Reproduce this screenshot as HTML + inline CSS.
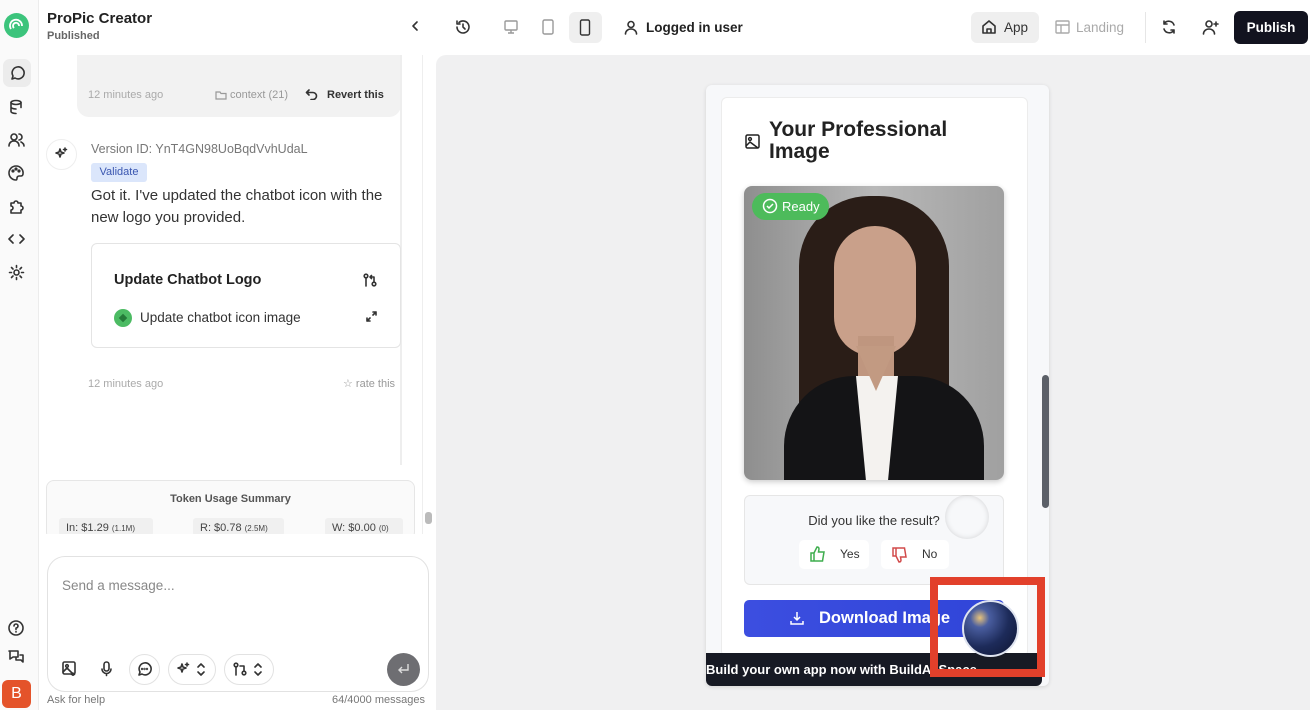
<!DOCTYPE html>
<html><head><style>
*{box-sizing:border-box;margin:0;padding:0}
body{width:1310px;height:710px;overflow:hidden;background:#fff;font-family:"Liberation Sans",sans-serif;position:relative;color:#1f2023}
.a{position:absolute}
svg{display:block}
.ic{stroke:#333;fill:none;stroke-width:1.6;stroke-linecap:round;stroke-linejoin:round}
</style></head><body>
<div class="a" style="left:0;top:0;width:39px;height:710px;background:#fafafa;border-right:1px solid #ececec"></div>
<div class="a" style="left:4px;top:13px;width:25px;height:25px;border-radius:50%;background:#3cc47c"></div>
<svg class="a" style="left:4px;top:13px" width="25" height="25"><path d="M7 16a6 6 0 1 1 11-3M10 15a3 3 0 1 1 5-2" stroke="#fff" stroke-width="1.8" fill="none"/></svg>
<div class="a" style="left:3px;top:59px;width:28px;height:28px;border-radius:7px;background:#ececec"></div>
<svg class="a ic" style="left:9px;top:66px" width="16" height="16"><path d="M3 13l1-3a6 6 0 1 1 2 2z"/></svg>
<svg class="a ic" style="left:9px;top:99px" width="16" height="16"><ellipse cx="7" cy="3.5" rx="5" ry="2"/><path d="M2 3.5v9c0 1 2 2 5 2M12 3.5v5M2 8c0 1 2 2 5 2"/></svg>
<svg class="a ic" style="left:8px;top:132px" width="17" height="16"><circle cx="6" cy="5" r="3"/><path d="M1 14c0-3 2-5 5-5s5 2 5 5M11 2a3 3 0 0 1 0 6M13 10c2 1 3 2 3 4"/></svg>
<svg class="a ic" style="left:8px;top:165px" width="17" height="16"><path d="M8 1a7 7 0 1 0 0 14c1 0 1-1 1-2s1-2 2-2h2a2 2 0 0 0 2-2A7 7 0 0 0 8 1z"/><circle cx="5" cy="6" r=".8"/><circle cx="8" cy="4" r=".8"/><circle cx="11" cy="6" r=".8"/></svg>
<svg class="a ic" style="left:8px;top:198px" width="17" height="16"><path d="M3 5h3a2 2 0 1 1 4 0h3v3a2 2 0 1 1 0 4v3H3v-3a2 2 0 1 0 0-4z"/></svg>
<svg class="a ic" style="left:8px;top:232px" width="17" height="14"><path d="M5 3L1 7l4 4M12 3l4 4-4 4"/></svg>
<svg class="a ic" style="left:8px;top:264px" width="17" height="17"><circle cx="8.5" cy="8.5" r="2.5"/><path d="M8.5 1.5v2M8.5 13.5v2M1.5 8.5h2M13.5 8.5h2M3.5 3.5l1.5 1.5M12 12l1.5 1.5M3.5 13.5L5 12M12 5l1.5-1.5"/></svg>
<svg class="a ic" style="left:8px;top:620px" width="16" height="16"><circle cx="8" cy="8" r="7"/><path d="M6 6a2 2 0 1 1 2 2v1.5M8 11.5v.5"/></svg>
<svg class="a ic" style="left:8px;top:649px" width="17" height="16"><path d="M1 2h9v6H5l-3 2V2zM12 6h3v7l-2-2H8v-2"/></svg>
<div class="a" style="left:2px;top:680px;width:29px;height:28px;border-radius:6px;background:#e4532a;color:#fff;font-size:16px;text-align:center;line-height:28px">B</div>

<div class="a" style="left:47px;top:10px;font-size:15px;font-weight:bold;color:#222">ProPic Creator</div>
<div class="a" style="left:47px;top:30px;font-size:11px;font-weight:bold;color:#666">Published</div>
<svg class="a ic" style="left:411px;top:20px" width="8" height="12"><path d="M6 2L2 6l4 4"/></svg>
<svg class="a ic" style="left:455px;top:19px" width="16" height="16"><path d="M2 8a6 6 0 1 0 2-4.5M2 2v3h3M8 5v3l2 2"/></svg>
<svg class="a" style="left:503px;top:19px" width="16" height="16" fill="none" stroke="#999" stroke-width="1.4"><rect x="2" y="2" width="12" height="9" rx="1"/><path d="M8 11v3M5 14h6"/></svg>
<svg class="a" style="left:541px;top:19px" width="14" height="16" fill="none" stroke="#999" stroke-width="1.4"><rect x="2" y="1" width="10" height="14" rx="1.5"/></svg>
<div class="a" style="left:569px;top:12px;width:33px;height:31px;border-radius:6px;background:#efefef"></div>
<svg class="a" style="left:579px;top:19px" width="12" height="17" fill="none" stroke="#333" stroke-width="1.4"><rect x="1.5" y="1" width="9" height="15" rx="1.5"/></svg>
<svg class="a ic" style="left:624px;top:20px" width="14" height="15"><circle cx="7" cy="4.5" r="3"/><path d="M1.5 14c0-3 2.5-5 5.5-5s5.5 2 5.5 5"/></svg>
<div class="a" style="left:646px;top:20px;font-size:13.5px;font-weight:bold;color:#222">Logged in user</div>
<div class="a" style="left:971px;top:12px;width:68px;height:31px;border-radius:6px;background:#efefef"></div>
<svg class="a ic" style="left:981px;top:19px" width="16" height="16"><path d="M2 7l6-5 6 5v7H2zM6 14v-4h4v4"/></svg>
<div class="a" style="left:1004px;top:20px;font-size:13.5px;color:#333">App</div>
<svg class="a" style="left:1055px;top:20px" width="15" height="14" fill="none" stroke="#aaa" stroke-width="1.4"><rect x="1" y="1" width="13" height="12" rx="1"/><path d="M1 5h13M6 5v8"/></svg>
<div class="a" style="left:1076px;top:20px;font-size:13.5px;color:#aaa">Landing</div>
<div class="a" style="left:1145px;top:12px;width:1px;height:31px;background:#e6e6e6"></div>
<svg class="a ic" style="left:1161px;top:19px" width="16" height="16"><path d="M13 6a5.5 5.5 0 0 0-10-1M3 10a5.5 5.5 0 0 0 10 1M3 2v3h3M13 14v-3h-3"/></svg>
<svg class="a ic" style="left:1202px;top:19px" width="17" height="16"><circle cx="7" cy="5" r="3"/><path d="M1.5 15c0-3 2.5-5 5.5-5s5.5 2 5.5 5M14 3v4M12 5h4"/></svg>
<div class="a" style="left:1234px;top:11px;width:74px;height:33px;border-radius:6px;background:#12131f;color:#fff;font-size:13.5px;font-weight:bold;text-align:center;line-height:33px">Publish</div>

<div class="a" style="left:77px;top:55px;width:324px;height:62px;background:#f2f2f2;border-radius:0 0 12px 12px"></div>
<div class="a" style="left:88px;top:89px;font-size:11px;color:#aaa">12 minutes ago</div>
<svg class="a" style="left:215px;top:90px" width="12" height="10" fill="none" stroke="#999" stroke-width="1.2"><path d="M1 2h4l1 1.5h5v5.5H1z"/></svg>
<div class="a" style="left:230px;top:89px;font-size:11px;color:#999">context (21)</div>
<svg class="a ic" style="left:305px;top:88px" width="13" height="12"><path d="M4 2L1.5 4.5 4 7M1.5 4.5H8a3.5 3.5 0 0 1 0 7H6"/></svg>
<div class="a" style="left:327px;top:89px;font-size:11px;font-weight:bold;color:#333">Revert this</div>
<div class="a" style="left:400px;top:55px;width:2px;height:410px;background:#eee"></div>
<div class="a" style="left:422px;top:55px;width:1px;height:480px;background:#eee"></div>

<div class="a" style="left:46px;top:139px;width:31px;height:31px;border-radius:50%;border:1px solid #eee;background:#fff"></div>
<svg class="a ic" style="left:54px;top:147px" width="14" height="14" stroke-width="1.3"><path d="M6 2l1 3 3 1-3 1-1 3-1-3-3-1 3-1zM11 1v3M9.5 2.5h3"/></svg>
<div class="a" style="left:91px;top:142px;font-size:12.5px;color:#777">Version ID: YnT4GN98UoBqdVvhUdaL</div>
<div class="a" style="left:91px;top:163px;width:56px;height:19px;border-radius:3px;background:#dbe6fb;color:#3a56b0;font-size:11px;text-align:center;line-height:19px">Validate</div>
<div class="a" style="left:91px;top:185px;width:310px;font-size:15px;line-height:22px;color:#333">Got it. I've updated the chatbot icon with the new logo you provided.</div>
<div class="a" style="left:91px;top:243px;width:310px;height:105px;border:1px solid #e4e4e4;border-radius:6px;background:#fff"></div>
<div class="a" style="left:114px;top:272px;font-size:14.5px;font-weight:bold;color:#222">Update Chatbot Logo</div>
<svg class="a ic" style="left:363px;top:273px" width="14" height="14" stroke-width="1.3"><circle cx="3" cy="3" r="1.8"/><circle cx="11" cy="11" r="1.8"/><path d="M3 5v8M11 9V4H7M8.5 2.5L7 4l1.5 1.5"/></svg>
<div class="a" style="left:114px;top:309px;width:18px;height:18px;border-radius:50%;background:#4cbb63"></div>
<div class="a" style="left:120px;top:315px;width:6px;height:6px;background:#257a39;transform:rotate(45deg)"></div>
<div class="a" style="left:140px;top:310px;font-size:13.5px;color:#333">Update chatbot icon image</div>
<svg class="a ic" style="left:366px;top:311px" width="11" height="11" stroke-width="1.2"><path d="M1 10l3-3M10 1L7 4M7 1h3v3M1 7v3h3"/></svg>
<div class="a" style="left:88px;top:378px;font-size:11px;color:#aaa">12 minutes ago</div>
<div class="a" style="left:343px;top:377px;font-size:11px;color:#999">☆ rate this</div>

<div class="a" style="left:46px;top:480px;width:369px;height:60px;border:1px solid #e6e6e6;border-radius:8px;background:#fafafa"></div>
<div class="a" style="left:46px;top:493px;width:369px;text-align:center;font-size:11px;font-weight:bold;color:#555">Token Usage Summary</div>
<div class="a" style="left:59px;top:518px;width:94px;height:18px;background:#f0f0f0;border-radius:3px;font-size:11px;color:#444;padding:4px 7px">In: $1.29 <span style="font-size:8px">(1.1M)</span></div>
<div class="a" style="left:193px;top:518px;width:91px;height:18px;background:#f0f0f0;border-radius:3px;font-size:11px;color:#444;padding:4px 7px">R: $0.78 <span style="font-size:8px">(2.5M)</span></div>
<div class="a" style="left:325px;top:518px;width:78px;height:18px;background:#f0f0f0;border-radius:3px;font-size:11px;color:#444;padding:4px 7px">W: $0.00 <span style="font-size:8px">(0)</span></div>
<div class="a" style="left:40px;top:534px;width:396px;height:176px;background:#fff"></div>
<div class="a" style="left:425px;top:512px;width:7px;height:12px;border-radius:3px;background:#bbb"></div>
<div class="a" style="left:47px;top:556px;width:382px;height:136px;border:1px solid #e2e2e2;border-radius:18px"></div>
<div class="a" style="left:62px;top:578px;font-size:13.5px;color:#888">Send a message...</div>
<svg class="a ic" style="left:62px;top:661px" width="15" height="15" stroke-width="1.4"><rect x="1" y="1" width="12" height="12" rx="1.5"/><circle cx="5" cy="5" r="1.3"/><path d="M1 11l4-4 5 5M11 12v3M9.5 13.5h3"/></svg>
<svg class="a ic" style="left:100px;top:661px" width="13" height="16" stroke-width="1.4"><rect x="4" y="1" width="5" height="9" rx="2.5"/><path d="M2 8a4.5 4.5 0 0 0 9 0M6.5 12.5v2"/></svg>
<div class="a" style="left:129px;top:654px;width:31px;height:31px;border:1px solid #e2e2e2;border-radius:50%"></div>
<svg class="a ic" style="left:137px;top:662px" width="15" height="15" stroke-width="1.3"><path d="M2 13l1-3a6 6 0 1 1 2 2z"/><circle cx="5" cy="7" r=".4"/><circle cx="7.5" cy="7" r=".4"/><circle cx="10" cy="7" r=".4"/></svg>
<div class="a" style="left:168px;top:654px;width:48px;height:31px;border:1px solid #e2e2e2;border-radius:16px"></div>
<svg class="a ic" style="left:176px;top:662px" width="30" height="15" stroke="#777" stroke-width="1.3"><path d="M6 2l1 3 3 1-3 1-1 3-1-3-3-1 3-1zM11 1v3M9.5 2.5h3M22 5l3-3 3 3M22 10l3 3 3-3"/></svg>
<div class="a" style="left:224px;top:654px;width:50px;height:31px;border:1px solid #e2e2e2;border-radius:16px"></div>
<svg class="a ic" style="left:233px;top:662px" width="32" height="15" stroke="#777" stroke-width="1.3"><circle cx="3" cy="3" r="1.8"/><circle cx="11" cy="11" r="1.8"/><path d="M3 5v8M11 9V4H7M22 5l3-3 3 3M22 10l3 3 3-3"/></svg>
<div class="a" style="left:387px;top:653px;width:33px;height:33px;border-radius:50%;background:#6e6e72"></div>
<svg class="a" style="left:396px;top:662px" width="15" height="15" fill="none" stroke="#ddd" stroke-width="1.4"><path d="M12 2v6H3M6 5L3 8l3 3"/></svg>
<div class="a" style="left:47px;top:694px;font-size:11px;color:#777">Ask for help</div>
<div class="a" style="left:332px;top:694px;font-size:11px;color:#777">64/4000 messages</div>

<div class="a" style="left:436px;top:55px;width:874px;height:655px;background:#f0f0f1;border-radius:10px 0 0 0"></div>
<div class="a" style="left:706px;top:85px;width:343px;height:601px;background:#f7f8fa;border-radius:6px;box-shadow:0 1px 4px rgba(0,0,0,.12)"></div>
<div class="a" style="left:721px;top:97px;width:307px;height:560px;background:#fff;border:1px solid #ececec;border-radius:6px"></div>
<div class="a" style="left:1042px;top:375px;width:7px;height:133px;border-radius:4px;background:#5c6068"></div>
<svg class="a" style="left:745px;top:134px" width="15" height="15" fill="none" stroke="#222" stroke-width="1.5"><rect x="1" y="1" width="13" height="13" rx="1.5"/><circle cx="5" cy="5" r="1.4"/><path d="M1 12l4-4 8 6"/></svg>
<div class="a" style="left:769px;top:119px;font-size:21px;font-weight:bold;line-height:22px;color:#222">Your Professional<br>Image</div>
<div class="a" style="left:744px;top:186px;width:260px;height:294px;border-radius:8px;overflow:hidden;background:linear-gradient(90deg,#8e8e8e,#b8b8b8 50%,#a0a0a0);box-shadow:0 2px 6px rgba(0,0,0,.2)">
 <div class="a" style="left:55px;top:10px;width:150px;height:300px;border-radius:70px 70px 20px 20px;background:#2a1d17"></div>
 <div class="a" style="left:90px;top:40px;width:82px;height:130px;border-radius:42px 42px 40px 40px;background:#c9a08a"></div>
 <div class="a" style="left:114px;top:150px;width:36px;height:60px;background:#bf967f"></div>
 <div class="a" style="left:40px;top:190px;width:200px;height:140px;border-radius:70px 70px 0 0;background:#141416"></div>
 <div class="a" style="left:112px;top:190px;width:42px;height:110px;background:#f4f2ef;clip-path:polygon(0 0,100% 0,75% 100%,25% 100%)"></div>
 <div class="a" style="left:112px;top:160px;width:40px;height:45px;background:#c29a82;clip-path:polygon(0 0,100% 0,50% 100%)"></div>
</div>
<div class="a" style="left:752px;top:193px;width:77px;height:27px;border-radius:14px;background:#4dbb5b;color:#fff;font-size:13px;line-height:27px;padding-left:30px">Ready</div>
<svg class="a" style="left:762px;top:198px" width="16" height="16" fill="none" stroke="#fff" stroke-width="1.5"><circle cx="8" cy="8" r="6.5"/><path d="M5 8l2 2 4-4"/></svg>
<div class="a" style="left:744px;top:495px;width:260px;height:90px;border:1px solid #e6e6e6;border-radius:6px;background:#f7f8fa"></div>
<div class="a" style="left:744px;top:513px;width:260px;text-align:center;font-size:13px;color:#333">Did you like the result?</div>
<div class="a" style="left:945px;top:495px;width:44px;height:44px;border-radius:50%;box-shadow:0 0 6px rgba(0,0,0,.15) inset"></div>
<div class="a" style="left:799px;top:540px;width:70px;height:29px;background:#fff;border-radius:5px;font-size:12px;color:#333;line-height:29px;padding-left:41px">Yes</div>
<svg class="a" style="left:810px;top:546px" width="16" height="16" fill="none" stroke="#3fae4f" stroke-width="1.5"><path d="M1 7h3v8H1zM4 7l3-6c1.5 0 2 1 2 2l-.5 3H14l-1.5 9H4"/></svg>
<div class="a" style="left:881px;top:540px;width:68px;height:29px;background:#fff;border-radius:5px;font-size:12px;color:#333;line-height:29px;padding-left:41px">No</div>
<svg class="a" style="left:892px;top:547px" width="16" height="16" fill="none" stroke="#d24b4b" stroke-width="1.5"><path d="M1 1h3v8H1zM4 9l3 6c1.5 0 2-1 2-2l-.5-3H14l-1.5-9H4"/></svg>
<div class="a" style="left:744px;top:600px;width:260px;height:37px;border-radius:5px;background:linear-gradient(90deg,#3c4ee0,#3045d8);color:#fff;font-size:16.5px;font-weight:bold;line-height:37px;padding-left:75px">Download Image</div>
<svg class="a" style="left:789px;top:610px" width="16" height="16" fill="none" stroke="#fff" stroke-width="1.5"><path d="M8 2v8M5 7l3 3 3-3M2 11v3h12v-3"/></svg>
<div class="a" style="left:706px;top:653px;width:336px;height:33px;background:#171a24;border-radius:0 0 6px 6px;color:#fff;font-size:13px;font-weight:bold;line-height:33px;overflow:hidden;white-space:nowrap">Build your own app now with BuildAI.Space</div>
<div class="a" style="left:962px;top:600px;width:57px;height:57px;border-radius:50%;background:radial-gradient(circle at 30% 30%,#e8c37a 0,#4a5ea0 18%,#1d2b5a 55%,#0e1430);border:2px solid #dfe4f0"></div>
<div class="a" style="left:930px;top:577px;width:115px;height:100px;border:8px solid #e2402b"></div>
</body></html>
